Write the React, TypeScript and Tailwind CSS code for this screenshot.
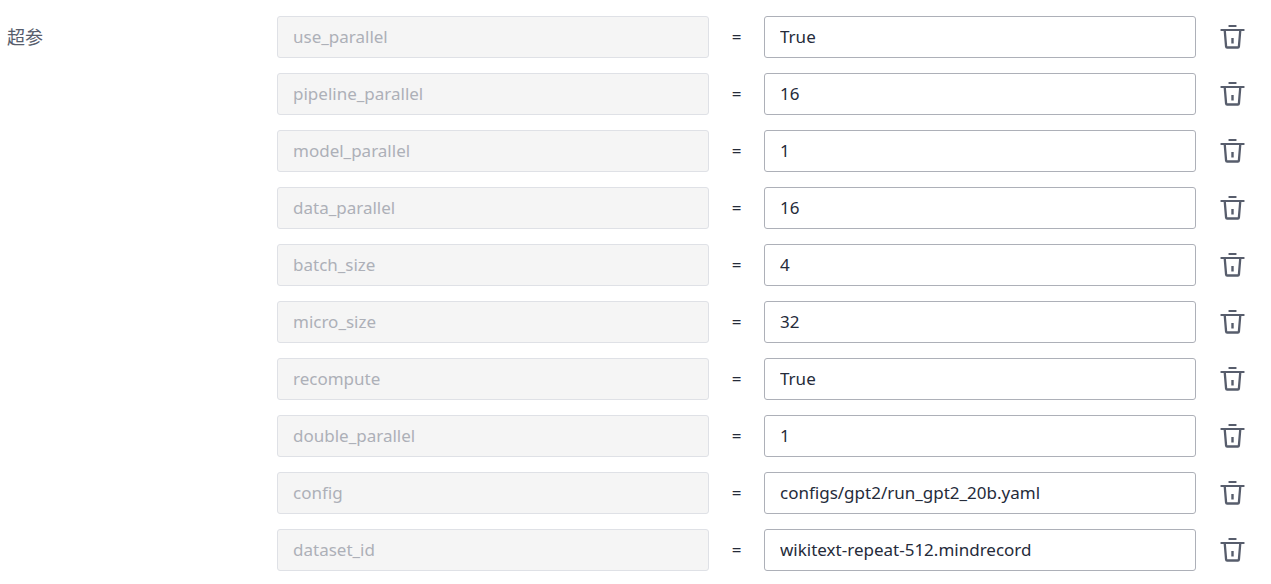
import { useState } from "react";

type Param = { name: string; value: string };

const initialParams: Param[] = [
  { name: "use_parallel", value: "True" },
  { name: "pipeline_parallel", value: "16" },
  { name: "model_parallel", value: "1" },
  { name: "data_parallel", value: "16" },
  { name: "batch_size", value: "4" },
  { name: "micro_size", value: "32" },
  { name: "recompute", value: "True" },
  { name: "double_parallel", value: "1" },
  { name: "config", value: "configs/gpt2/run_gpt2_20b.yaml" },
  { name: "dataset_id", value: "wikitext-repeat-512.mindrecord" },
];

function TrashIcon() {
  return (
    <svg viewBox="0 0 25 26" className="h-[26px] w-[25px]" fill="none" stroke="currentColor" strokeWidth="2" aria-hidden="true">
      <path d="M9.3 2h6.4M1.3 6h22.4" strokeLinecap="round" />
      <path d="M4.7 6l1.4 16.6a1 1 0 0 0 1 .9h10.8a1 1 0 0 0 1-.9L20.3 6" strokeWidth="2.3" />
      <path d="M12.5 14v5.5" strokeWidth="2.4" />
    </svg>
  );
}

export default function App() {
  const [params, setParams] = useState(initialParams);

  const update = (name: string, value: string) =>
    setParams(params.map((p) => (p.name === name ? { ...p, value } : p)));

  return (
    <fieldset className="flex bg-white pt-4 pr-[26px] pb-3 pl-[7px] font-['Noto_Sans','Noto_Sans_CJK_SC',sans-serif] text-[17px] leading-6 text-[#252b3a]">
      <h2 id="params-title" className="w-[270px] shrink-0 pt-[9px] text-[18px] text-[#575d6c]">
        超参
      </h2>
      <ul aria-labelledby="params-title" className="flex min-w-0 flex-1 flex-col gap-[15px]">
        {params.map((p) => (
          <li key={p.name} className="flex items-center">
            <input
              type="text"
              disabled
              aria-label="name"
              value={p.name}
              className="h-[42px] min-w-0 flex-1 rounded-[3px] border border-[#dfe1e6] bg-[#f5f5f5] px-[15px] pb-0.5 text-[#adb0b8]"
            />
            <span className="w-[55px] shrink-0 text-center">=</span>
            <input
              type="text"
              aria-label={p.name}
              value={p.value}
              onChange={(e) => update(p.name, e.target.value)}
              className="h-[42px] min-w-0 flex-1 rounded-[3px] border border-[#adb0b8] bg-white px-[15px] pb-0.5"
            />
            <button
              type="button"
              aria-label={`delete ${p.name}`}
              onClick={() => setParams(params.filter((q) => q !== p))}
              className="ml-6 shrink-0 text-[#575d6c]"
            >
              <TrashIcon />
            </button>
          </li>
        ))}
      </ul>
    </fieldset>
  );
}
